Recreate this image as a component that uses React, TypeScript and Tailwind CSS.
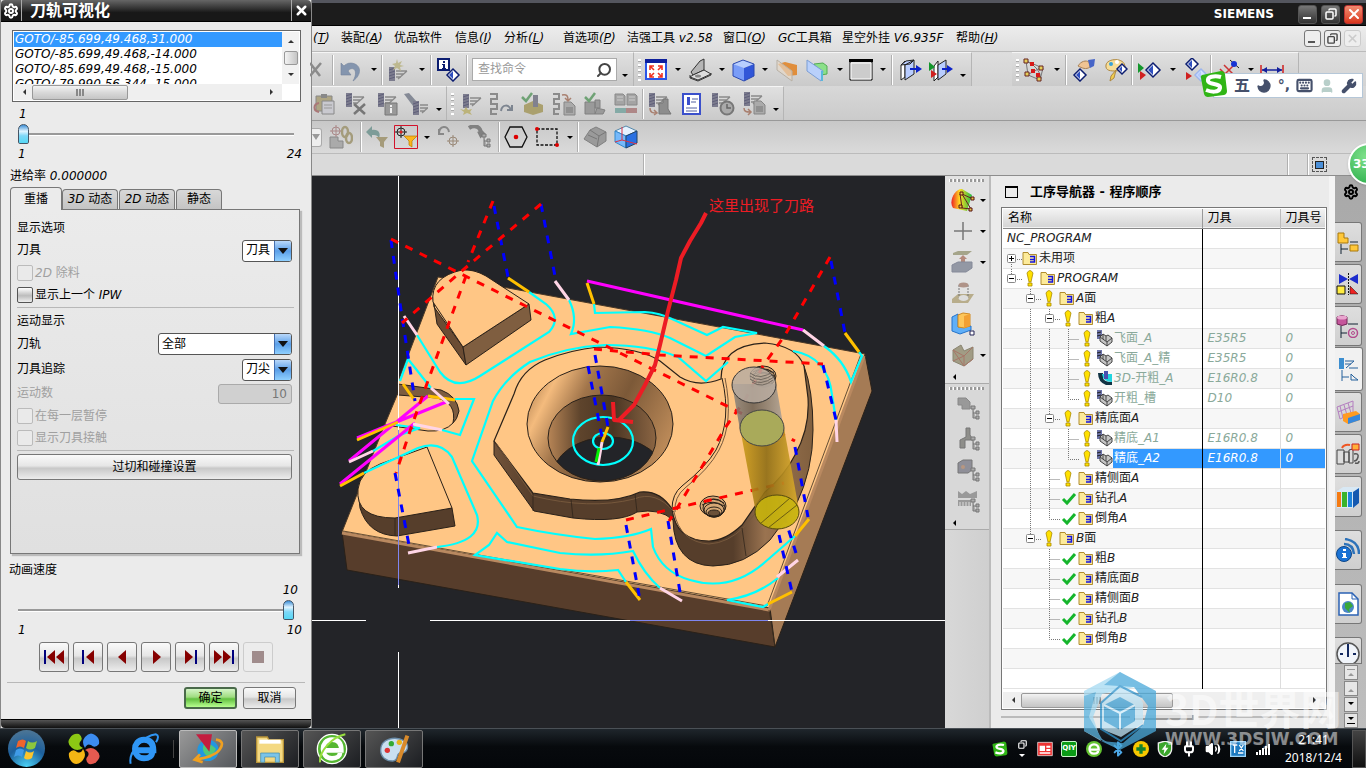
import type { ReactNode } from "react";
import { Settings, X, Search, Wrench, Keyboard, Moon, User, Copy, Volume2, Bluetooth, Plug } from "lucide-react";

// Latin runs are italic, Chinese stays upright
const Mixed = ({ text }: { text: string }) => (
    <span className="whitespace-pre">
        {text.split(/([\x20-\x7e]+)/).map((part, i) => (i % 2 ? <i key={i}>{part}</i> : part))}
    </span>
);

const Svg = ({ children, className = "h-6 w-6" }: { children: ReactNode; className?: string }) => (
    <svg viewBox="0 0 24 24" className={`shrink-0 ${className}`} fill="none" aria-hidden="true">{children}</svg>
);

/* ---------- small drawing parts ---------- */

const Drill = ({ x = 3, y = 1, c = "#7c7c8e" }: { x?: number; y?: number; c?: string }) => (
    <g transform={`translate(${x} ${y})`}>
        <path d="M0 0h6v14H0z" fill={c} />
        <path d="M0 3l6-2M0 6l6-2M0 9l6-2M0 12l6-2" stroke="#60607a" />
        <path d="M7 4h11M7 7h8M7 10h5M18 4l-9 8" stroke="#8a8a8a" strokeWidth="1.3" />
    </g>
);
const Diamond = ({ x = 12, y = 12, s = 7, soft = false }: { x?: number; y?: number; s?: number; soft?: boolean }) => (
    <g transform={`translate(${x} ${y})`}>
        <path d={`M0 ${-s}L${s} 0L0 ${s}L${-s} 0z`} fill={soft ? "#d5e2ff" : "#fff"} stroke={soft ? "#9db6ee" : "#0c1d70"} strokeWidth="1.5" />
        <path d={`M0 ${-s + 2}V${s - 2}L${-s + 2} 0z`} fill={soft ? "#b3c9fb" : "#2f4fc0"} />
    </g>
);
const Doc = ({ x, y }: { x: number; y: number }) => (
    <g transform={`translate(${x} ${y})`}>
        <path d="M0 0h7l4 4v9H0z" fill="#aaa" stroke="#858585" />
        <path d="M2 6h7M2 8h7M2 10h7" stroke="#777" />
    </g>
);
const Nodes = ({ x, y }: { x: number; y: number }) => (
    <path transform={`translate(${x} ${y})`} d="M0 0h4v3H0zM2 3v9h3M2 7h3M5 5h3v3H5zM5 10h3v3H5z" stroke="#777" fill="#aaa" />
);
const Cross = ({ x, y, c = "#a55" }: { x: number; y: number; c?: string }) => (
    <g transform={`translate(${x} ${y})`} stroke={c}>
        <circle r="4" /><path d="M-6 0H6M0-6V6" />
    </g>
);

const icons: Record<string, ReactNode> = {
    cut: <path d="M0 5l10 13M11 5L0 18" stroke="#8b8b8b" strokeWidth="2.5" />,
    undo: <path d="M3 5v12h10l-3-4c5-6 11 0 5 10 9-6 9-17-2-18-4 0-6 2-7 3z" fill="#8495ae" stroke="#76859c" strokeWidth=".6" />,
    create: <><Drill x={3} y={9} /><path d="M11 1l1 4 4-2-2 4 4 1-4 1 1 4-4-3-4 2 2-4-3-2 4-1z" fill="#bdb88f" /></>,
    info: <><path d="M1 1h11v11H1z" fill="#fff" stroke="#0c1d70" strokeWidth="2" /><path d="M6 3h2v2H6zM5 6h3v4h1v1H5v-1h1V7H5z" fill="#0c1d70" /><Diamond x={16} y={17} s={6} /></>,
    fit: <><path d="M2 2h20v19H2z" fill="#fff" stroke="#2a55e8" strokeWidth="2" /><path d="M1 1h22v4H1z" fill="#0d1f9c" /><path d="M6 12V8h4M6 8l4 4M18 12V8h-4M18 8l-4 4M6 15v4h4M6 19l4-4M18 15v4h-4M18 19l-4-4" stroke="#f03020" strokeWidth="1.6" /></>,
    view: <><path d="M3 14L12 3l4-2v11l-11 5z" fill="#b5b5b5" stroke="#333" /><path d="M16 12L5 17l-3 2 8 3 13-6z" fill="#ddd" stroke="#333" /><path d="M2 17v3l8 3 13-6v-2" stroke="#333" /><ellipse cx="10" cy="18" rx="3" ry="1.500" fill="#888" /></>,
    cube: <><path d="M1 6l10-4 11 4-11 4z" fill="#b8ceff" /><path d="M1 6l11 4v13L1 18z" fill="#7a9df8" /><path d="M22 6l-10 4v13l10-5z" fill="#3156d8" /><path d="M1 6l10-4 11 4v12l-10 5L1 18z" stroke="#2b49b0" /></>,
    planeA: <><path d="M3 6l7-2 12 3v10l-9 1z" fill="#e08e3c" /><path d="M2 2l15 11v10L2 12z" fill="#e6d9c8" fillOpacity=".65" stroke="#b8b0a4" /></>,
    planeB: <><path d="M9 6l9-1 4 3v8l-6 1z" fill="#8be089" stroke="#55ab55" /><path d="M2 2l16 11-2 10L2 13z" fill="#b9d0fb" stroke="#7b9dd4" /><path d="M17 13v10" stroke="#5bb8dc" strokeWidth="2" /></>,
    rect: <><path d="M1 2h22v20H1z" fill="#ccc" stroke="#000" /><path d="M0 1h24v3H0z" fill="#000" /><path d="M2 5h20v16H2z" stroke="#fff" /></>,
    section: <><path d="M2 7l4-4v16l-4 3z" fill="#fff" stroke="#222" /><path d="M2 7l5-4 8-1-4 4zM6 7l9-5v14l-9 6z" fill="#b9cdff" stroke="#222" /><path d="M11 11h8" stroke="#0b21c8" strokeWidth="2" /><path d="M17 7l6 4-6 4z" fill="#0b21c8" /></>,
    section2: <><path d="M5 8l4-5v16l-4 4z" fill="#fff" stroke="#222" /><path d="M9 7l8-5v14l-8 6z" fill="#b9cdff" stroke="#222" /><path d="M13 11h7" stroke="#0b21c8" strokeWidth="2" /><path d="M18 7l6 4-6 4z" fill="#0b21c8" /><path d="M0 4l6 5-6 4z" fill="#14962c" /><path d="M2 12l6 4-6 4z" fill="#d02020" /></>,
    sketch: <><path d="M4 3l2 14 12 5 3-12z M6 4q12 6 13 17M5 17L20 9" stroke="#777" /><path d="M2 1h4v4H2zM3 14h4v4H3zM17 8h4v4h-4zM15 19h4v4h-4z" fill="#e5cf59" stroke="#622" /><path d="M8 4h4v4H8zM9 11h4v4H9zM14 15h4v4h-4z" fill="#d71919" /></>,
    hand: <><Diamond x={8} y={17} s={6} /><path d="M6 8c3-5 8-6 11-4l1 5c-4 3-8 1-12-1z" fill="#f0c493" stroke="#a98258" /><path d="M16 2l7-1-1 7-4 2z" fill="#4665c8" /></>,
    palette: <><path d="M2 7C3 0 21-1 21 9c0 5-6 3-9 4-5 0-11 0-10-6z" fill="#f7dd98" stroke="#ad8843" /><path d="M12 12l-2 8-4 3 1-5z" fill="#f2cf4e" stroke="#ad8843" /><circle cx="7" cy="6" r="2" fill="#37a2d8" /><circle cx="13" cy="4" r="2" fill="#fff" /><Diamond x={18} y={11} s={5} /></>,
    play: <><path d="M0 5l6 5-6 5z" fill="#14962c" /><path d="M2 13l6 4-6 5z" fill="#d02020" /><Diamond x={15} y={12} s={7} /></>,
    play2: <><Diamond x={9} y={6} s={6} /><Diamond x={18} y={17} s={6} soft /><path d="M3 14l6 4-6 4z" fill="#d02020" /></>,
    axis: <><path d="M2 22L18 6M3 11l9 9M7 7l9 9M1 16l6 6" stroke="#c33" strokeWidth="1.5" /><path d="M13 2l9 8" stroke="#222" /><circle cx="17" cy="6" r="3" fill="#1733d4" /></>,
    dim: <><path d="M1 7v10M23 7v10" stroke="#d02020" strokeWidth="1.5" /><path d="M2 12h20" stroke="#14209c" strokeWidth="1.5" /><path d="M2 12l5-3v6zM22 12l-5-3v6z" fill="#14209c" /></>,
    paste: <><path d="M4 4h16v15H4z" fill="#aea583" stroke="#888" /><path d="M9 2h6v4H9z" fill="#888" /><path d="M10 9h12v13H10z" fill="#c9c9cf" stroke="#888" /><path d="M12 13h8M12 16h8" stroke="#999" /><path d="M7 20c-6-1-6-8 0-9" stroke="#a77" strokeWidth="2" /></>,
    del: <><Drill /><path d="M11 12l11 10M22 12L11 22" stroke="#777" strokeWidth="2.5" /></>,
    opinfo: <><Drill /><path d="M10 11h12v12H10z" fill="#999" stroke="#777" /><path d="M15 13h2v2h-2zM15 16h2v5h-2z" fill="#eee" /></>,
    tilt: <><path d="M0 2l5-1 8 9-4 4z" fill="#858a96" /><Drill x={9} y={9} /></>,
    drill2: <><Drill x={5} y={2} /><path d="M2 17l4 1 2-3 2 3 4-1-2 3 2 3-5-2-4 2 1-3z" fill="#bcb37a" /></>,
    path: <><path d="M1 2h7v5H2v5h6v5H2v5h6" stroke="#8b8b8b" strokeWidth="2" /><path d="M12 19c1-7 8-7 10-1M23 13v5h-5" stroke="#7d8590" strokeWidth="2" /></>,
    verify: <><path d="M3 13l9-4 10 4v7l-10 3-9-3z" fill="#aaa06e" /><path d="M12 3h5v12h-5z" fill="#81818f" /><path d="M1 5l4 4 6-8" stroke="#6fa275" strokeWidth="2.5" /></>,
    post: <><path d="M1 2h6v5H2v5h5v5H2v5h5" stroke="#8b8b8b" strokeWidth="2" /><Doc x={12} y={10} /><path d="M10 3c5-1 6 1 6 5M13 6l3 3 3-3" stroke="#a98070" strokeWidth="1.5" /></>,
    machine: <><path d="M2 10h10v12H2zM12 8h5v8h-5zM14 16l8 2-2 4h-8z" fill="#9a9a9a" stroke="#808080" /><path d="M2 5l4 4 6-8" stroke="#6fa275" strokeWidth="2.5" /></>,
    compare: <><path d="M1 2h8l2 2v9H1zM13 2h8l2 2v9H13z" fill="#a4a4a4" stroke="#888" /><path d="M3 5h6M3 8h6M15 5h6M15 8h6" stroke="#ccc" /><path d="M1 16h11v5H1z" fill="#84aaa6" /><path d="M12 16h11v5H12z" fill="#ae8787" /></>,
    simulate: <><Drill x={1} y={1} /><path d="M11 11h4V7h5v10l3 5H11z" fill="#8d8d8d" stroke="#777" /><path d="M2 16c0 5 3 5 7 5M6 18l3 3-3 2" stroke="#a98070" strokeWidth="1.5" /></>,
    docblue: <><path d="M3 2h17v20H3z" fill="#fff" stroke="#3b50cb" strokeWidth="2" /><path d="M7 5h3v8H7z" fill="#3b50cb" /><path d="M12 7h6M11 10h5M6 16h11M6 19h11" stroke="#5261a0" /></>,
    clock: <><Drill x={1} /><circle cx="16" cy="16" r="6.500" fill="#aaa" stroke="#777" strokeWidth="2" /><path d="M16 12v4h4" stroke="#666" strokeWidth="1.500" /></>,
    shopdoc: <><Drill x={2} y={0} /><Doc x={12} y={9} /><path d="M2 16c0 4 3 4 6 4M6 17l3 3-3 3" stroke="#a98070" strokeWidth="1.5" /></>,
    link: <><path d="M1 12h8v4h5v7H1z" fill="#aaa" stroke="#888" /><Cross x={7} y={6} c="#a88" /><ellipse cx="16" cy="7" rx="3" ry="5" stroke="#a49c7c" strokeWidth="2.5" /><ellipse cx="20" cy="13" rx="3" ry="5" stroke="#a49c7c" strokeWidth="2.5" /></>,
    filter0: <><path d="M1 7l6-6v4c7-1 9 4 7 8-2-3-3-3-7-3v3z" fill="#7d9c98" /><path d="M11 12h12l-4 5v6l-4-2v-4z" fill="#a59b7a" /></>,
    filter: <><path d="M.5.500h23v23H.5z" stroke="#d3122a" /><Cross x={7} y={7} c="#222" /><circle cx="7" cy="7" r="1.500" fill="#d22" /><path d="M10 11h13l-5 5v6l-3-2v-4z" fill="#fbb51b" stroke="#b87a00" strokeWidth=".7" /></>,
    rot: <><path d="M2 9c0-9 9-9 10-2M2 4v5h5" stroke="#888" strokeWidth="2" /><Cross x={16} y={16} c="#987" /></>,
    flow: <><path d="M1 3c6-4 12-1 12 6M11 6l2 4 3-3" stroke="#808080" strokeWidth="4" /><Nodes x={14} y={9} /></>,
    hex: <><path d="M6 2h12l5 10-5 10H6L1 12z" stroke="#111" strokeWidth="1.300" /><circle cx="12" cy="12" r="2.300" fill="#d00" /></>,
    dashrect: <><path d="M2 4h20v16H2z" stroke="#111" strokeWidth="1.300" strokeDasharray="3 1.500" /><circle cx="2" cy="4" r="2" fill="#d00" /><circle cx="22" cy="20" r="2" fill="#d00" /></>,
    shadebox: <><path d="M1 14l6-9 6-3 10 5v9l-9 6z" fill="#9a9a9a" stroke="#808080" /><path d="M7 5l9 6-2 11M16 11l7-4M5 10l9 4" stroke="#777" /></>,
    bluebox: <><path d="M1 6l11-5 11 5-11 5z" fill="#e5f2ff" stroke="#58a" /><path d="M1 6l11 5v12L1 17z" fill="#75b9fb" stroke="#38c" /><path d="M23 6l-11 5v12l11-5z" fill="#2870e2" stroke="#246" /><path d="M8 2v13l15 4M8 15l-7 2" stroke="#d34" /></>,
    rainbow: <><path d="M2 20C-3 12 5 0 11 1l10 6-5 16z" fill="url(#rainbow)" /><path d="M9 6l2 14 9 1-9-15 11 5" stroke="#622" /><path d="M9 4h3v3H9zM8 17h3v3H8zM20 9h3v3h-3zM18 20h3v3h-3z" fill="#eac54b" stroke="#511" /></>,
    plus: <path d="M12 3v18M3 12h18" stroke="#777" strokeWidth="1.500" />,
    extrude: <><path d="M2 3l5-2h14l-5 4H2z" fill="#a5a58a" /><path d="M10 14V9H8l4-4 4 4h-2v5z" fill="#b48a7c" /><path d="M1 15l6-3h14v6l-6 4H1z" fill="#9398a4" stroke="#858a99" /></>,
    boss: <><path d="M1 18l6-5h16l-6 9H1z" fill="#b8ad8b" /><path d="M8 4v13M17 4v13" stroke="#777" strokeDasharray="2 1" /><ellipse cx="12.500" cy="4" rx="5" ry="2.500" fill="#af9388" /><ellipse cx="12.500" cy="17" rx="5" ry="3" fill="#ddd" /></>,
    patch: <><path d="M1 5l6-3v13l13-1v4l-11 4-8-3z" fill="#5faff8" stroke="#2473ca" /><path d="M7 3l5-2 7 1v12l-6 2-6-1z" fill="#fdc65a" stroke="#d08a22" /><path d="M13 4l6-2v12l-6 2z" fill="#f2a033" /><path d="M19 19h4v4h-4z" fill="#fff" stroke="#225" /></>,
    mesh: <><path d="M2 7l8-5 3 6 9-4v12l-9 7-11-5z" fill="#a19c85" stroke="#8a8570" /><path d="M2 7l11 6 9-9M13 13v10M2 7l11 16 9-7M2 18l11-5" stroke="#a77668" /></>,
    nodeA: <><path d="M1 2h8l4 4v7H5V9H1z" fill="#999" stroke="#888" /><Nodes x={14} y={10} /></>,
    nodeB: <><path d="M9 1h4v7l3 5H8v8H3v-8l6-3z" fill="#8e8e8a" stroke="#777" /><Nodes x={14} y={10} /></>,
    nodeC: <><path d="M1 5l5-3h9v10l-4 3H1z" fill="#8f8f98" stroke="#777" /><circle cx="6" cy="9" r="2" fill="#b79781" /><Nodes x={14} y={10} /></>,
    nodeD: <><path d="M1 2l4 3 4-3 4 3 7-3v7H1zM1 11h13v6H1z" fill="#999" /><path d="M3 13v4M6 13v4M9 13v4M12 13v4" stroke="#ddd" /><Nodes x={14} y={10} /></>,
};

const Icon = ({ name, className }: { name: string; className?: string }) => <Svg className={className}>{icons[name]}</Svg>;

/* ---------- toolbar pieces ---------- */

const Tool = ({ name, w }: { name: string; w: string }) => (
    <button type="button" aria-label={name} className={`flex h-full shrink-0 items-center justify-center ${w}`}>
        <Icon name={name} />
    </button>
);
const Caret = ({ w, low = false }: { w: string; low?: boolean }) => (
    <button type="button" aria-label="more" className={`flex h-full shrink-0 items-center justify-center ${low ? "pt-3" : ""} ${w}`}>
        <span className="border-x-[3px] border-t-[3px] border-x-transparent border-t-black" />
    </button>
);
const Sep = () => <span className="h-[30px] w-[2px] shrink-0 border-l border-[#b0b0b0] bg-white" />;
const Grip = () => <span className="ml-1 mr-px h-[22px] w-[3px] shrink-0 bg-[repeating-linear-gradient(#fff_0_2px,#aaa_2px_3px,transparent_3px_5px)]" />;

const Group = ({ children }: { children: ReactNode }) => (
    <div className="flex h-full shrink-0 items-center border-r border-t border-r-[#b5b5b5] border-t-[#f5f5f5] bg-gradient-to-b from-[#e0e0e0] to-[#cacaca]">{children}</div>
);

const menus: [string, string, string][] = [
    ["", "T", "w-[28px]"],
    ["装配", "A", "w-[53px]"],
    ["优品软件", "", "w-[61px]"],
    ["信息", "I", "w-[49px]"],
    ["分析", "L", "w-[59px]"],
    ["首选项", "P", "w-[64px]"],
    ["洁强工具 v2.58", "", "w-[96px]"],
    ["窗口", "O", "w-[55px]"],
    ["GC工具箱", "", "w-[64px]"],
    ["星空外挂 V6.935F", "", "w-[114px]"],
    ["帮助", "H", "w-[48px]"],
];

const TitleBar = () => (
    <div className="flex h-[26px] items-center justify-end gap-[4px] border-b border-t-[3px] border-b-black border-t-[#54565e] bg-[#1c1c1c] pr-[3px]">
        <span className="mr-[20px] text-[12px] font-bold text-white">SIEMENS</span>
        <button type="button" aria-label="Minimize" className="flex h-[19px] w-[19px] items-end rounded-[3px] border border-[#555] bg-gradient-to-b from-[#777] to-[#333] p-1"><span className="h-[2px] w-[8px] bg-white" /></button>
        <button type="button" aria-label="Restore" className="flex h-[19px] w-[19px] items-center justify-center rounded-[3px] border border-[#555] bg-gradient-to-b from-[#777] to-[#333] text-white"><Copy className="h-3 w-3 -scale-x-100" strokeWidth={3} /></button>
        <button type="button" aria-label="Close" className="flex h-[19px] w-[19px] items-center justify-center rounded-[3px] border border-[#b33] bg-gradient-to-b from-[#f08a70] to-[#d9341a] text-white"><X className="h-4 w-4" strokeWidth={3} /></button>
    </div>
);

const MenuBar = () => (
    <div className="flex h-[26px] items-center border-b border-[#bbb] bg-gradient-to-b from-[#ececec] to-[#dedede] pb-px pl-px">
        {menus.map(([label, key, w]) => (
            <button type="button" key={label + key} className={`shrink-0 text-left ${w}`}>
                <Mixed text={label} />
                {key && <i>(<u>{key}</u>)</i>}
            </button>
        ))}
        <div className="ml-auto flex gap-[3px] pr-[5px]">
            <button type="button" aria-label="Minimize document" className="flex h-[17px] w-[17px] items-end rounded-[3px] border border-[#777] bg-[#eee] p-[3px]"><span className="h-[2px] w-[7px] bg-[#555]" /></button>
            <button type="button" aria-label="Restore document" className="flex h-[17px] w-[17px] items-center justify-center rounded-[3px] border border-[#777] bg-[#eee] text-[#444]"><Copy className="h-[11px] w-[11px] -scale-x-100" strokeWidth={3} /></button>
            <button type="button" disabled aria-label="Close document" className="flex h-[17px] w-[17px] items-center justify-center rounded-[3px] border border-[#ccc] bg-[#eee] text-[#ccc]"><X className="h-[13px] w-[13px]" strokeWidth={3} /></button>
        </div>
    </div>
);

const Toolbars = () => (
    <>
        <div className="flex h-[34px] bg-gradient-to-b from-[#dedede] to-[#d3d3d3]">
            <Group>
                <Tool name="cut" w="w-[20px]" /><Sep />
                <Tool name="undo" w="w-[32px]" /><Caret w="w-[15px]" /><Sep />
                <Tool name="create" w="w-[30px]" /><Caret w="w-[17px]" /><Sep />
                <Tool name="info" w="w-[34px]" /><Sep />
                <label className="ml-1 flex h-[23px] w-[145px] items-center border border-[#aaa] bg-white px-1">
                    <input aria-label="查找命令" placeholder="查找命令" className="w-0 flex-1 pl-px outline-none placeholder:text-[#999]" />
                    <Search className="h-4 w-4 -scale-x-100 text-[#444]" strokeWidth={3} />
                </label>
                <Caret w="w-[16px]" low />
            </Group>
            <Group>
                <Grip /><Tool name="fit" w="w-[28px]" /><Caret w="w-[16px]" />
                <Tool name="view" w="w-[27px]" /><Caret w="w-[17px]" />
                <Tool name="cube" w="w-[27px]" /><Caret w="w-[16px]" />
                <Tool name="planeA" w="w-[28px]" /><Tool name="planeB" w="w-[31px]" /><Caret w="w-[15px]" />
                <Tool name="rect" w="w-[28px]" /><Caret w="w-[16px]" /><Sep />
                <Tool name="section" w="w-[35px]" /><Tool name="section2" w="w-[26px]" /><Caret w="w-[17px]" low />
            </Group>
            <span className="w-[40px] shrink-0" />
            <Group>
                <Grip /><Tool name="sketch" w="w-[28px]" /><Caret w="w-[17px]" /><Sep />
                <Tool name="hand" w="w-[33px]" /><Tool name="palette" w="w-[31px]" /><Sep />
                <Tool name="play" w="w-[33px]" /><Caret w="w-[13px]" /><Tool name="play2" w="w-[31px]" /><Sep />
                <Tool name="axis" w="w-[34px]" /><Caret w="w-[10px]" /><Tool name="dim" w="w-[32px]" /><span className="w-[10px]" />
            </Group>
        </div>
        <div className="flex h-[35px] border-b border-[#999] bg-gradient-to-b from-[#d8d8d8] to-[#cbcbcb]">
            <Group>
                <Tool name="paste" w="w-[24px]" /><Tool name="del" w="w-[37px]" /><Tool name="opinfo" w="w-[27px]" /><Tool name="tilt" w="w-[32px]" /><Caret w="w-[14px]" low />
            </Group>
            <Group>
                <Grip /><Tool name="drill2" w="w-[30px]" /><Tool name="path" w="w-[32px]" /><Tool name="verify" w="w-[31px]" />
                <Tool name="post" w="w-[31px]" /><Tool name="machine" w="w-[31px]" /><Tool name="compare" w="w-[32px]" /><Sep />
                <Tool name="simulate" w="w-[32px]" /><Tool name="docblue" w="w-[31px]" /><Tool name="clock" w="w-[31px]" /><Tool name="shopdoc" w="w-[31px]" /><Caret w="w-[14px]" low />
            </Group>
        </div>
        <div className="flex h-[33px] items-center border-b border-[#bbb] bg-gradient-to-b from-[#c8c8c8] to-[#dadada]">
            <span className="flex h-[19px] w-[10px] shrink-0 items-center rounded-r-[3px] border border-l-0 border-[#aaa] bg-[#eee]"><span className="border-x-[4px] border-t-[6px] border-x-transparent border-t-[#999]" /></span>
            <Tool name="link" w="w-[38px]" /><Sep />
            <Tool name="filter0" w="w-[29px]" /><Tool name="filter" w="w-[30px]" /><Caret w="w-[12px]" />
            <Tool name="rot" w="w-[31px]" /><Tool name="flow" w="w-[32px]" /><span className="w-[2px]" /><Sep />
            <Tool name="hex" w="w-[32px]" /><Tool name="dashrect" w="w-[30px]" /><Caret w="w-[15px]" /><Sep />
            <Tool name="shadebox" w="w-[32px]" /><Tool name="bluebox" w="w-[30px]" />
        </div>
        <div className="flex h-[22px] items-center border-b border-[#8d8d8d] bg-[#dadada]">
            <span className="ml-[331px] h-full w-[2px] border-l border-[#b0b0b0] bg-white" />
            <span className="ml-auto h-full w-[2px] border-l border-[#b0b0b0] bg-white" />
            <span className="ml-[18px] h-full w-[2px] border-l border-[#b0b0b0] bg-white" />
            <span className="ml-[3px] mr-[39px] flex h-[15px] w-[15px] items-center justify-center border border-dashed border-[#555]"><span className="h-[8px] w-[9px] border border-[#222] bg-[#4a8fd8]" /></span>
        </div>
    </>
);

/* ---------- tool path dialog ---------- */

const raised = "border border-[#777] bg-[linear-gradient(#fafafa,#e6e6e6_45%,#c8c8c8_55%,#ececec)]";

const Slider = ({ label, value, max }: { label: string; value: number; max: number }) => (
    <input
        type="range"
        aria-label={label}
        min={1}
        max={max}
        defaultValue={value}
        className="block h-[20px] w-full appearance-none bg-[linear-gradient(transparent_9px,#999_9px_11px,#fff_11px_12px,transparent_12px)] [&::-webkit-slider-thumb]:h-[20px] [&::-webkit-slider-thumb]:w-[11px] [&::-webkit-slider-thumb]:appearance-none [&::-webkit-slider-thumb]:rounded-b-[2px] [&::-webkit-slider-thumb]:rounded-t-[6px] [&::-webkit-slider-thumb]:border [&::-webkit-slider-thumb]:border-[#456] [&::-webkit-slider-thumb]:bg-[linear-gradient(#3b8fd8,#e0f4ff_35%,#7fd8f8_60%,#55d8f5)]"
    />
);

const Drop = ({ id, value, w }: { id: string; value: string; w: string }) => (
    <span className={`flex h-[22px] overflow-hidden rounded-[3px] border border-[#555] bg-white ${w}`}>
        <select id={id} className="w-0 flex-1 appearance-none bg-transparent pl-[3px] outline-none"><option>{value}</option></select>
        <span className="flex w-[17px] items-center justify-center border-l border-[#456fb0] bg-[linear-gradient(#b9d8fa,#5b9fe8_50%,#8fd0ff)]">
            <span className="border-x-[5px] border-t-[6px] border-x-transparent border-t-[#111]" />
        </span>
    </span>
);

const Check = ({ text, disabled = false }: { text: string; disabled?: boolean }) => (
    <label className={`flex h-[22px] items-center gap-[2px] ${disabled ? "text-[#a0a0a0]" : ""}`}>
        <input type="checkbox" disabled={disabled} className="h-4 w-4 appearance-none rounded-[2px] border border-[#555] bg-[linear-gradient(#fff,#bcbcbc_55%,#eee)] disabled:border-[#bbb] disabled:bg-none disabled:bg-[#eaeaea]" />
        <Mixed text={text} />
    </label>
);

const Arrow = ({ dir }: { dir: string }) => <span className={`shrink-0 border-[3px] border-transparent ${dir}`} />;

const HScroll = ({ thumb }: { thumb: string }) => (
    <div className="flex h-[16px] items-center bg-[#efefef]">
        <span className="flex w-[18px] justify-center"><Arrow dir="border-r-[#333]" /></span>
        <span className={`flex h-[15px] items-center justify-center gap-px rounded-[2px] border border-[#999] bg-[linear-gradient(#f3f3f3,#d9d9d9_50%,#c5c5c5)] ${thumb}`}>
            <span className="h-[7px] w-[2px] bg-[#888]" /><span className="h-[7px] w-[2px] bg-[#888]" /><span className="h-[7px] w-[2px] bg-[#888]" />
        </span>
        <span className="ml-auto flex w-[18px] justify-center"><Arrow dir="border-l-[#333]" /></span>
    </div>
);

const gotoLines = ["GOTO/-85.699,49.468,31.000", "GOTO/-85.699,49.468,-14.000", "GOTO/-85.699,49.468,-15.000", "GOTO/-79.990,56.344,-15.000"];

const playback: [string, ReactNode][] = [
    ["First", <><path d="M3 5v14" stroke="#00007c" strokeWidth="2" /><path d="M13 5v14L5 12zM22 5v14l-8-7z" fill="#860000" /></>],
    ["Previous", <><path d="M7 5v14" stroke="#00007c" strokeWidth="2" /><path d="M18 5v14l-8-7z" fill="#860000" /></>],
    ["Reverse", <path d="M16 5v14l-8-7z" fill="#860000" />],
    ["Play", <path d="M9 5v14l8-7z" fill="#860000" />],
    ["Next", <><path d="M7 5v14l8-7z" fill="#860000" /><path d="M18 5v14" stroke="#00007c" strokeWidth="2" /></>],
    ["Last", <><path d="M2 5v14l8-7zM11 5v14l8-7z" fill="#860000" /><path d="M21 5v14" stroke="#00007c" strokeWidth="2" /></>],
];

const Dialog = () => (
    <aside className="flex w-[312px] shrink-0 flex-col border-x border-[#888] bg-[#ebebeb]">
        <header className="flex h-[22px] items-center rounded-t-[4px] border-b border-black bg-[linear-gradient(#666,#333_40%,#181818_60%)] text-white">
            <span className="flex h-full w-[21px] items-center justify-center border-r border-[#aaa]"><Settings className="h-4 w-4" strokeWidth={3} /></span>
            <h1 className="pl-2 text-[16px] font-bold leading-[20px]">刀轨可视化</h1>
            <button type="button" aria-label="Close dialog" className="ml-auto flex h-full w-[20px] items-center justify-center border-l border-[#aaa]"><X className="h-[15px] w-[15px]" strokeWidth={4} /></button>
        </header>

        <div className="ml-[11px] mr-[10px] mt-[8px] h-[72px] border border-[#666] bg-white p-px">
            <div className="flex h-[52px]">
                <ul className="h-full flex-1 overflow-hidden">
                    {gotoLines.map((line, i) => (
                        <li key={i} className={`h-[15px] pl-px italic leading-[15px] ${i === 0 ? "bg-[#3399ff] text-white" : ""}`}>{line}</li>
                    ))}
                </ul>
                <div className="flex w-[17px] flex-col items-center justify-between bg-[#f2f2f2] py-[5px]">
                    <Arrow dir="border-b-[#333]" />
                    <span className="h-[14px] w-[14px] rounded-[2px] border border-[#999] bg-gradient-to-r from-[#f3f3f3] to-[#c5c5c5]" />
                    <Arrow dir="border-t-[#333]" />
                </div>
            </div>
            <div className="mr-[17px]"><HScroll thumb="w-[96px]" /></div>
        </div>

        <div className="px-[17px] pt-[2px] italic">
            <div className="h-[20px] pl-px leading-[20px]">1</div>
            <Slider label="刀轨位置" value={1} max={24} />
            <div className="-mr-2 flex h-[20px] justify-between leading-[20px]"><span>1</span><span>24</span></div>
        </div>
        <p className="h-[23px] px-[9px] leading-[24px]"><Mixed text="进给率 0.000000" /></p>

        <div role="tablist" className="ml-[9px] flex h-[22px] items-end">
            {["重播", "3D 动态", "2D 动态", "静态"].map((tab, i) => (
                <button
                    type="button"
                    role="tab"
                    key={tab}
                    className={`rounded-t-[4px] border border-b-0 border-[#777] ${i === 0 ? "z-10 -mb-px h-[23px] w-[52px] bg-[#ebebeb]" : `mr-px h-[20px] bg-gradient-to-b from-[#d8d8d8] to-[#c4c4c4] ${i === 3 ? "w-[46px]" : "w-[56px]"}`}`}
                >
                    <Mixed text={tab} />
                </button>
            ))}
        </div>
        <div className="ml-[9px] mr-[11px] flex h-[345px] flex-col border border-[#777] bg-gradient-to-b from-[#ebebeb] to-[#e0e0e0] pl-[6px] pr-[5px] pt-[7px] shadow-[2px_2px_1px_#bbb]">
            <h2 className="h-[22px] leading-[22px]">显示选项</h2>
            <div className="flex h-[23px] items-center justify-between pr-[2px]"><label htmlFor="tool">刀具</label><Drop id="tool" value="刀具" w="w-[50px]" /></div>
            <Check text="2D 除料" disabled />
            <Check text="显示上一个 IPW" />
            <hr className="my-px border-[#b8b8b8]" />
            <h2 className="h-[24px] leading-[24px]">运动显示</h2>
            <div className="flex h-[22px] items-center justify-between pr-[2px]"><label htmlFor="path">刀轨</label><Drop id="path" value="全部" w="w-[134px]" /></div>
            <div className="mt-[3px] flex h-[23px] items-center justify-between pr-[2px]"><label htmlFor="trace">刀具追踪</label><Drop id="trace" value="刀尖" w="w-[50px]" /></div>
            <div className="mt-px flex h-[23px] items-center justify-between pr-[2px] text-[#a0a0a0]">
                <label htmlFor="count">运动数</label>
                <input id="count" disabled defaultValue="10" className="h-[20px] w-[74px] rounded-[3px] border border-[#aaa] bg-[#d0d0d0] pr-1 text-right text-[#777]" />
            </div>
            <Check text="在每一层暂停" disabled />
            <Check text="显示刀具接触" disabled />
            <hr className="mb-[3px] mt-px border-[#b8b8b8]" />
            <button type="button" className={`mr-[2px] h-[26px] rounded-[3px] ${raised}`}>过切和碰撞设置</button>
        </div>

        <h2 className="mt-[6px] h-[20px] px-[8px] leading-[20px]">动画速度</h2>
        <div className="px-[17px] italic">
            <div className="-mr-1 h-[20px] text-right leading-[20px]">10</div>
            <Slider label="动画速度" value={10} max={10} />
            <div className="-mr-2 flex h-[22px] justify-between leading-[20px]"><span>1</span><span>10</span></div>
        </div>
        <div className="flex gap-[4px] pl-[38px]">
            {playback.map(([name, shape]) => (
                <button type="button" key={name} aria-label={name} className={`flex h-[30px] w-[30px] items-center justify-center rounded-[3px] ${raised}`}><Svg>{shape}</Svg></button>
            ))}
            <button type="button" disabled aria-label="Stop" className="flex h-[30px] w-[30px] items-center justify-center rounded-[3px] border border-[#ccc] bg-[#ececec]"><span className="h-3 w-3 bg-[#a08c8c]" /></button>
        </div>
        <hr className="mx-[6px] mt-[10px] border-[#b8b8b8]" />
        <div className="mt-[4px] flex justify-end gap-[6px] pr-[15px]">
            <button type="button" className="h-[22px] w-[53px] rounded-[3px] border-2 border-[#4a6a4a] bg-[linear-gradient(#d5f5c8,#9fdc80_45%,#62c040_55%,#b8ff90)]">确定</button>
            <button type="button" className={`h-[22px] w-[53px] rounded-[3px] ${raised}`}>取消</button>
        </div>
        <footer className="mt-auto h-[9px] rounded-b-[4px] border-t border-black bg-gradient-to-b from-[#555] to-[#111]" />
    </aside>
);

/* ---------- 3D view ---------- */

const cyanPaths = [
    "M594 304L595 313L645 312Q660 313 672 319L707 335L723 327L757 333L735 337L706 356L670 338Q650 329 610 327L571 334Q578 318 569 300",
    "M529 292L546 304Q562 318 549 332L480 376Q455 392 440 372L417 335",
    "M431 388L408 359L400 381",
    "M455 399H474L460 435L442 430",
    "M728 362L706 381L678 357Q650 345 605 345Q565 347 530 362Q505 378 493 401L472 461L517 527Q555 535 595 539Q630 538 651 529L653 547Q662 572 690 580Q730 592 764 563L795 536",
    "M364 473L418 448Q440 440 452 457L477 515Q484 542 437 547",
    "M373 451L400 435L420 428L396 425",
    "M660 588Q644 574 633 551Q600 557 560 553L507 542L497 533L489 545L475 555L560 569Q590 573 618 570L626 582",
    "M768 604L763 607L727 600Q756 596 778 578",
    "M824 346Q844 360 851 382L862 356L859 352",
    "M793 351Q828 357 832 395L836 420",
];
const redPaths = [
    "M391 239L622 354L735 410L795 441",
    "M493 201L468 262M466 276L412 425L396 473",
    "M541 204L470 264L402 323",
    "M594 349L660 355L823 364",
    "M830 257L785 335L763 366L745 400L727 425L676 510L669 521",
    "M626 520L680 507L784 483",
];
const bluePaths = [
    "M391 240L401 310L415 401", "M494 206L508 277", "M541 204L555 276", "M831 261L845 333", "M823 365L836 420",
    "M588 366L602 437", "M595 355L608 427", "M395 473L409 545", "M626 525L640 600", "M668 521L680 592",
    "M795 447L808 517", "M779 500L796 553", "M779 535L792 592",
];
const goldPath = "M587 283L594 304M508 278L529 292M845 333L859 352M357 440L398 422M340 486L364 473M403 384L415 401M428 396L455 400M608 427L602 442M626 582L640 600M768 604L792 592M795 536L809 519";
const pinkPath = "M555 281L569 300M803 330L824 346M404 316L417 335M431 388L449 404M413 424L442 430M349 462L373 451M408 553L437 547M602 442L598 465M836 420L837 442M660 588L682 601M777 577L798 560";

const bossTop =
    "M494 441L514 394Q521 370 545 360Q570 350 598 347Q640 348 660 361L680 377Q698 388 721 379Q721 345 765 343Q797 346 804 366L808 398Q810 428 795 455Q785 475 765 492L742 525Q725 541 709 541Q676 541 672 509Q660 490 640 492Q615 504 570 499L533 493z";
const bossWall =
    "M494 441V455L534 511L573 518Q620 523 637 512Q660 508 673 520Q674 565 713 566Q745 566 770 540L796 505Q813 470 813 430Q813 390 804 366L750 420H560z";

const Thread = ({ cx, cy }: { cx: number; cy: number }) => (
    <g stroke="#2a2119" strokeWidth="1" fill="none">
        <ellipse cx={cx} cy={cy} rx="13" ry="10" fill="#d6a875" />
        <ellipse cx={cx + 1} cy={cy + 2} rx="11" ry="9" />
        <ellipse cx={cx + 1} cy={cy + 4} rx="10" ry="7" />
        <ellipse cx={cx + 1} cy={cy + 6} rx="8" ry="5" />
        <ellipse cx={cx + 1} cy={cy + 7} rx="6" ry="3" fill="#6b5139" />
        <path d={`M${cx - 10} ${cy - 4}q10-6 21 1M${cx - 11} ${cy - 1}q11-6 22 1`} />
    </g>
);

const Viewport = () => (
    <main className="min-w-0 flex-1 bg-[#232428]">
        <svg viewBox="312 176 633 552" className="block w-full" fill="none" role="img" aria-label="工件刀路">
            <defs>
                <linearGradient id="cone" x1="0" y1=".2" x2="1" y2=".6">
                    <stop offset="0" stopColor="#b58453" /><stop offset=".14" stopColor="#f4bb7d" /><stop offset=".35" stopColor="#a0744a" /><stop offset=".6" stopColor="#7c5938" /><stop offset="1" stopColor="#bd8b59" />
                </linearGradient>
                <linearGradient id="bore"><stop offset="0" stopColor="#b78556" /><stop offset=".3" stopColor="#5e442c" /><stop offset=".6" stopColor="#4a3523" /><stop offset="1" stopColor="#8b6543" /></linearGradient>
                <linearGradient id="wall"><stop offset="0" stopColor="#72533a" /><stop offset=".12" stopColor="#563e2b" /><stop offset=".75" stopColor="#563e2b" /><stop offset=".85" stopColor="#9a7350" /><stop offset="1" stopColor="#81603f" /></linearGradient>
                <linearGradient id="shank"><stop offset="0" stopColor="#8d8780" /><stop offset=".4" stopColor="#675d53" /><stop offset="1" stopColor="#aba298" /></linearGradient>
                <linearGradient id="flute"><stop offset="0" stopColor="#cf9e1c" /><stop offset=".45" stopColor="#8e6d14" /><stop offset="1" stopColor="#deae2c" /></linearGradient>
                <clipPath id="boreClip"><ellipse cx="602" cy="438" rx="54" ry="43" /></clipPath>
            </defs>

            {/* stock */}
            <path d="M342 532L770 608L775 647L347 570z" fill="#573d2b" stroke="#2a2119" />
            <path d="M770 608L865 354L872 391L775 647z" fill="#a57b55" stroke="#2a2119" />
            <path d="M342 532L385 424L398 393V382L438 277L508 288L865 354L770 608z" fill="#ffc685" stroke="#4a3826" />
            <path d="M342 533L769 610L864 356" stroke="#b98960" strokeWidth="3" />
            <path d="M343 531L767 606L861 354M769 610L775 646" stroke="#3c2e20" strokeWidth=".8" />

            {/* side slot */}
            <path d="M398 384L441 390Q457 396 459 411Q457 420 453 423Q457 403 437 398L398 395z" fill="#7d5c3f" stroke="#2a2119" />
            <path d="M453 423Q445 432 428 431L385 425" stroke="#2a2119" />

            {/* corner bosses */}
            <path d="M434 307L463 347L466 365L437 324L433 297z" fill="#6b4c33" stroke="#2a2119" />
            <path d="M463 347L529 304L531 320L466 365z" fill="#7f5e40" stroke="#2a2119" />
            <path d="M433 302Q430 277 462 270Q474 269 486 276L529 304L463 347z" fill="#ffc685" stroke="#2a2119" />
            <path d="M358 490L360 508Q368 535 397 536L455 526L452 508L395 505z" fill="#563e2b" stroke="#2a2119" />
            <path d="M427 447L452 508L395 518Q355 518 358 489Q360 472 380 464z" fill="#ffc685" stroke="#2a2119" />
            <path d="M395 518V536" stroke="#2a2119" strokeWidth=".7" />

            {/* centre boss */}
            <path d={bossWall} fill="url(#wall)" stroke="#2a2119" />
            <path d={bossTop} fill="#ffc685" stroke="#2a2119" strokeWidth="1.2" />
            <path d="M722 378Q732 420 716 450Q706 467 682 486Q672 494 672 509" stroke="#2a2119" />
            <path d="M725 378Q734 422 719 450Q709 469 685 488Q674 497 675 512M496 443L533 496Q590 510 634 499Q656 490 674 512Q680 542 709 544Q728 543 744 527L770 496" stroke="#76583c" />
            <path d="M533 493V511M571 499L573 518M635 494L637 512M742 528L746 556" stroke="#2a2119" strokeWidth=".7" />
            <ellipse cx="600" cy="424" rx="73" ry="58" fill="url(#cone)" stroke="#2a2119" />
            <g clipPath="url(#boreClip)">
                <ellipse cx="602" cy="438" rx="54" ry="43" fill="url(#bore)" />
                <ellipse cx="609" cy="478" rx="57" ry="41" fill="#232428" stroke="#2a2119" />
            </g>
            <ellipse cx="602" cy="438" rx="54" ry="43" stroke="#2a2119" />
            <Thread cx={713} cy={506} />
            <Thread cx={763} cy={376} />

            {/* coordinate axes */}
            <path d="M398.500 176V588M398.500 652V728M312 620.500H366M430 620.500H945" stroke="#fff" />
            <path d="M398.500 430V585M630 620.500H768" stroke="#7f86f0" />

            {/* moves */}
            <g strokeWidth="2.2" stroke="#00ffff">
                {cyanPaths.map((d) => <path key={d} d={d} />)}
                <ellipse cx="603" cy="441" rx="30" ry="24" /><ellipse cx="603" cy="441" rx="10" ry="8" />
            </g>
            <path d="M587 281L803 330M446 402L357 438M428 396L349 461M415 423L340 484" stroke="#ff00ff" strokeWidth="3" />
            <path d={goldPath} stroke="#ffc000" strokeWidth="3" />
            <path d={pinkPath} stroke="#ffd5e6" strokeWidth="3" />
            <path d="M596 462L599 448" stroke="#00f000" strokeWidth="3" />
            <g stroke="#0000ff" strokeWidth="3" strokeDasharray="8 8">{bluePaths.map((d) => <path key={d} d={d} />)}</g>
            <g stroke="#ff0000" strokeWidth="3" strokeDasharray="8 8">{redPaths.map((d) => <path key={d} d={d} />)}</g>

            {/* cutter */}
            <path d="M732 384L740 430H784L776 384z" fill="url(#shank)" fillOpacity=".85" />
            <ellipse cx="754" cy="385" rx="22" ry="18" fill="#b8aca0" fillOpacity=".85" stroke="#333" />
            <path d="M740 428L756 513Q760 528 777 529Q797 528 799 510L784 428z" fill="url(#flute)" fillOpacity=".9" />
            <ellipse cx="762" cy="428" rx="22" ry="18" fill="#a9aa5a" stroke="#444" />
            <ellipse cx="777" cy="512" rx="22" ry="17" fill="#c9b60f" fillOpacity=".85" stroke="#554a10" />
            <path d="M760 524L790 498M768 528L797 505" stroke="#6a5c12" />
            <path d="M750 373q10 8 24-2M750 376q10 8 24-2M750 379q10 8 24-2M752 382q10 7 21-2" stroke="#71685e" />

            {/* hand drawn note */}
            <path d="M706 213L701 223L690 241L681 258L676 280L668 311L660 345L655 365L645 385L634 405L618 421M613 402L614 420L633 422" stroke="#ed1c24" strokeWidth="4" strokeLinejoin="round" />
            <text x="709" y="211" fontSize="15" fill="#ed1c24">这里出现了刀路</text>
        </svg>
    </main>
);

/* ---------- operation navigator ---------- */

type Row = { g: string; s?: "!" | "v"; icon?: "folder" | "mill" | "cavity"; text: string; tool?: string; selected?: boolean };

// guide letters: | line, t tee, L corner, _ blank, + / - expander
const rows: Row[] = [
    { g: "", text: "NC_PROGRAM" },
    { g: "+", icon: "folder", text: "未用项" },
    { g: "-", s: "!", icon: "folder", text: "PROGRAM" },
    { g: "_-", s: "!", icon: "folder", text: "A面" },
    { g: "_|-", s: "!", icon: "folder", text: "粗A" },
    { g: "_||t", s: "!", icon: "mill", text: "飞面_A", tool: "E35R5" },
    { g: "_||t", s: "!", icon: "mill", text: "飞面_A_精", tool: "E35R5" },
    { g: "_||t", s: "!", icon: "cavity", text: "3D-开粗_A", tool: "E16R0.8" },
    { g: "_||L", s: "!", icon: "mill", text: "开粗_槽", tool: "D10" },
    { g: "_|-", s: "!", icon: "folder", text: "精底面A" },
    { g: "_||t", s: "!", icon: "mill", text: "精底_A1", tool: "E16R0.8" },
    { g: "_||L", s: "!", icon: "mill", text: "精底_A2", tool: "E16R0.8", selected: true },
    { g: "_|t", s: "!", icon: "folder", text: "精侧面A" },
    { g: "_|t", s: "v", icon: "folder", text: "钻孔A" },
    { g: "_|L", s: "v", icon: "folder", text: "倒角A" },
    { g: "_-", s: "!", icon: "folder", text: "B面" },
    { g: "__t", s: "v", icon: "folder", text: "粗B" },
    { g: "__t", s: "v", icon: "folder", text: "精底面B" },
    { g: "__t", s: "v", icon: "folder", text: "精侧面B" },
    { g: "__t", s: "v", icon: "folder", text: "钻孔B" },
    { g: "__L", s: "v", icon: "folder", text: "倒角B" },
    { g: "", text: "" },
    { g: "", text: "" },
];

const guideLines: Record<string, string> = { "|": "M8.500 0V20", t: "M8.500 0V20M8.500 10.500H19", L: "M8.500 0V10.500H19", _: "", "+": "M14 10.500H19M8.500 15V20", "-": "M14 10.500H19M8.500 0V5" };

const Guide = ({ kind }: { kind: string }) => (
    <svg viewBox="0 0 19 19" className="h-[19px] w-[19px] shrink-0" fill="none" aria-hidden="true">
        <path d={guideLines[kind]} stroke="#777" strokeDasharray="1 1" />
        {(kind === "+" || kind === "-") && (
            <>
                <rect x="4.500" y="5.500" width="8" height="8" rx="1" fill="#fff" stroke="#888" />
                <path d={kind === "+" ? "M6 9.500h5M8.500 7v5" : "M6 9.500h5"} stroke="#000" />
            </>
        )}
    </svg>
);

const Status = ({ s }: { s: "!" | "v" }) => (
    <svg viewBox="0 0 18 19" className="h-[19px] w-[18px] shrink-0" fill="none" aria-hidden="true">
        {s === "!" ? (
            <path d="M5 4q3-5 6 0L9 13H7zM6 14h4v3H6z" fill="#ffe100" stroke="#a98900" strokeWidth=".8" />
        ) : (
            <path d="M3 10l4 4 8-9" stroke="#15b52c" strokeWidth="3" />
        )}
    </svg>
);

const RowIcon = ({ icon }: { icon: "folder" | "mill" | "cavity" }) => (
    <svg viewBox="0 0 16 18" className="h-[18px] w-[16px] shrink-0" fill="none" aria-hidden="true">
        {icon === "folder" && (
            <>
                <path d="M1 3.500h5l1 2h7.500v10H1z" fill="#fdeb9a" stroke="#b08d2f" />
                <path d="M8 7.500h4.500V13H8M8 10.500h4" stroke="#1414e0" strokeWidth="1.500" />
            </>
        )}
        {icon === "mill" && (
            <>
                <path d="M0 1h5v9H0z" fill="#6b72a8" /><path d="M0 4l4-1M0 7l4-1" stroke="#222" />
                <path d="M3 8l3-3 3 2 2-1 4 3v4l-5 4-7-5z" fill="#c4c4c4" stroke="#444" /><path d="M3 8l7 5 5-4M10 13v4M6 5v5M9 7v5" stroke="#444" />
            </>
        )}
        {icon === "cavity" && (
            <>
                <path d="M1 4h5v5q1 4 9 4v3H9Q1 13 1 4z" fill="#134" /><path d="M5 5h10v8Q6 13 5 5z" fill="#21d5e0" /><path d="M7 2h4v8H7z" fill="#4950b0" />
            </>
        )}
    </svg>
);

const Navigator = () => (
    <section className="flex w-[344px] shrink-0 flex-col border-r-[6px] border-[#f4f4f4] bg-[#ebebeb] pb-[7px] pl-[10px] pr-[2px]">
        <h2 className="flex h-[31px] items-center gap-[12px] pl-1 text-[13px] font-bold"><span className="h-[12px] w-[13px] border border-t-2 border-black" />工序导航器 - 程序顺序</h2>
        <div className="flex flex-1 flex-col border border-[#777] bg-white p-px">
            <table className="w-full table-fixed border-collapse">
                <thead>
                    <tr className="h-[19px] border-b border-[#888] bg-gradient-to-b from-[#f3f3f3] to-[#d5d5d5] text-left leading-[18px]">
                        <th className="border-r border-[#999] pl-[5px] font-normal">名称</th>
                        <th className="w-[78px] border-r border-[#bbb] pl-[5px] font-normal">刀具</th>
                        <th className="w-[45px] pl-[5px] font-normal">刀具号</th>
                    </tr>
                </thead>
                <tbody>
                    {rows.map((row, i) => (
                        <tr key={i} className={`h-[20px] border-b border-[#e2e2e2] ${i % 2 ? "bg-[#f7f7f7]" : ""} ${row.tool ? "text-[#8aa99a]" : "text-[#222]"}`}>
                            <td className="overflow-hidden border-r border-r-black p-0">
                                <div className="flex h-[19px] items-center">
                                    {row.g.split("").map((k, j) => <Guide key={j} kind={k} />)}
                                    {row.s && <Status s={row.s} />}
                                    {row.icon && <RowIcon icon={row.icon} />}
                                    <span className={`flex h-full flex-1 items-center ${row.icon === "folder" ? "pl-px" : row.icon ? "pl-px" : "pl-[4px]"} ${row.selected ? "bg-[#3399ff] text-white" : ""}`}><Mixed text={row.text} /></span>
                                </div>
                            </td>
                            <td className={`border-r border-[#ddd] py-0 pl-[5px] italic leading-[19px] ${row.selected ? "bg-[#3399ff] text-white" : ""}`}>{row.tool}</td>
                            <td className={`py-0 pl-[5px] italic leading-[19px] ${row.selected ? "bg-[#3399ff] text-white" : ""}`}>{row.tool && "0"}</td>
                        </tr>
                    ))}
                </tbody>
            </table>
            <div className="mt-auto"><HScroll thumb="w-[152px]" /></div>
        </div>
        <div className="mt-[3px] flex h-[8px] items-center gap-[4px]"><span className="h-[2px] flex-1 bg-[#bbb]" /><span className="h-[5px] w-[60px] border-b-2 border-r-2 border-[#999] bg-[#ddd]" /><span className="h-[2px] flex-1 bg-[#bbb]" /></div>
    </section>
);

const sideTools: [string, boolean][] = [["rainbow", true], ["plus", true], ["extrude", true], ["boss", false], ["patch", false], ["mesh", true]];
const DotRow = () => <span className="mx-auto my-[3px] block h-[3px] w-[36px] bg-[repeating-linear-gradient(90deg,#fff_0_1px,#999_1px_3px,transparent_3px_4px)]" />;

const SideTools = () => (
    <div className="flex w-[46px] shrink-0 flex-col border-r-2 border-[#bbb] bg-gradient-to-r from-[#d8d8d8] to-[#cfcfcf]">
        <div className="border-b border-[#aaa] bg-[#e2e2e2]">
            <DotRow />
            {sideTools.map(([name, more]) => (
                <div key={name} className="flex h-[31px] items-center pb-px pl-[6px]"><Tool name={name} w="w-[24px]" />{more && <Caret w="w-[16px]" />}</div>
            ))}
            <span className="flex h-[12px] items-center pl-[5px]"><Arrow dir="border-r-black" /></span>
        </div>
        <div className="border-b border-[#aaa] bg-[#d8d8d8]">
            <DotRow />
            {["nodeA", "nodeB", "nodeC", "nodeD"].map((name) => <div key={name} className="flex h-[31px] items-center pb-[2px] pl-[12px]"><Tool name={name} w="w-[24px]" /></div>)}
            <span className="flex h-[12px] items-center pl-[5px]"><Arrow dir="border-r-black" /></span>
        </div>
    </div>
);

const plainTab = "bg-gradient-to-b from-[#dedede] to-[#cfcfcf]";

const resourceTabs: [string, string, ReactNode][] = [
    ["Assembly", "mt-[14px] h-[40px]", <><path d="M2 3h6v5h4v5H2zM14 15h8v6h-8z" fill="#ffc83a" stroke="#a8790c" /><path d="M14 12h8M5 14v10M5 19h7" stroke="#123" /></>],
    ["Constraint", "mt-[2px] h-[40px]", <><path d="M3 2l9 5-9 5zM22 2l-9 5 9 5z" fill="#1c2ccd" /><path d="M12.500 1v22" stroke="#111" strokeDasharray="2 1" /><path d="M1 14h8v8H1z" fill="#ffec42" stroke="#111" /><path d="M14 14v8h8z" fill="#e22" stroke="#111" strokeWidth=".5" /></>],
    ["Part", "mt-[2px] h-[40px]", <><path d="M1 3q5-3 10 0v7q-5 3-10 0z" fill="#c4569b" stroke="#712957" /><ellipse cx="6" cy="3.500" rx="5" ry="2" fill="#e9a5cf" /><path d="M12 10h10M5 12v12M5 19h6" stroke="#123" /><circle cx="17" cy="19" r="4.500" stroke="#b34b8d" strokeWidth="1.500" /><circle cx="17" cy="19" r="1.500" stroke="#b34b8d" /></>],
    ["Operation", "mt-px h-[44px]", <><path d="M2 1h5v11H2z" fill="#3c8ed0" /><path d="M8 4h9M8 7h6M17 4l-8 7M12 11h9M5 13v11M5 20h7M14 17v6h7l-4-3z" stroke="#24609c" /></>],
    ["Machine", "mt-px h-[40px]", <><path d="M1 7l16-6v12L4 19zM4 6l3 12M8 5l3 10M12 3l3 10M2 12l15-6" stroke="#b47ec0" /><path d="M7 14l13-3 4 3v6l-12 4-5-3z" fill="#ff9b21" /><path d="M12 18l12-4v6l-12 4z" fill="#3787db" /></>],
    ["Tools", "mt-[2px] h-[40px]", <><path d="M1 8h7v14H1zM8 10h5v10H8zM13 8l4-1v14h-4z" fill="#ddd" stroke="#444" /><path d="M18 12q5-1 4 3t-4 4M19 21q4 1 4-2" stroke="#555" strokeWidth="1.500" /><path d="M16 2h7v6h-7z" fill="#ffb03a" stroke="#c22" /><path d="M6 6q2-4 8-3" stroke="#e52" strokeWidth="2" /></>],
    ["Library", "mt-[2px] h-[41px]", <><path d="M1 6l6-4h17l-2 17-5 4H1z" fill="#d8e8f4" /><path d="M1 7h4v15H1z" fill="#f57a12" /><path d="M6 7h5v15H6z" fill="#38b32c" /><path d="M12 7h4v15h-4z" fill="#1c83dc" /><path d="M17 7l6-4v15l-6 5z" fill="#1559b0" /></>],
    ["Info", "mt-[13px] h-[40px]", <><circle cx="8" cy="16" r="7.500" fill="#1b72d4" stroke="#0d4687" /><path d="M7 11h3v2H7zM6 15h4v4h1v1H6v-1h1v-3H6z" fill="#fff" /><path d="M8 6q9 0 10 10M9 1q14 2 14 15" stroke="#2d72b9" strokeWidth="2.500" /></>],
    ["History page", "mt-[14px] h-[40px]", <><path d="M3 1h13l6 6v16H3z" fill="#fff" stroke="#2b62b4" strokeWidth="1.500" /><path d="M16 1v6h6" stroke="#2b62b4" /><circle cx="12" cy="15" r="6" fill="#4a87c7" /><path d="M9 11l5-1 3 4-4 3 1 4-5-5z" fill="#3aa83a" /></>],
    ["History", "mt-[13px] h-[27px] rounded-b-none", <><circle cx="12" cy="15" r="11" fill="#f0f4fa" stroke="#555" strokeWidth="1.500" /><path d="M12 5v13M4 15h3M17 15h3" stroke="#122860" strokeWidth="2" /></>],
];

const ResourceBar = () => (
    <nav className="w-[31px] shrink-0 bg-gradient-to-b from-[#a9a9a9] to-[#bdbdbd]">
        <span className="flex h-[32px] items-center justify-center"><Settings className="h-4 w-4" strokeWidth={3} /></span>
        {resourceTabs.map(([name, cls, shape]) => (
            <button type="button" key={name} aria-label={name} className={`flex items-center justify-center rounded-r-[3px] border border-l-0 border-[#777] ${name === "Operation" ? "w-[28px] bg-[#f1f1f1]" : `w-[27px] ${plainTab}`} ${cls}`}><Svg>{shape}</Svg></button>
        ))}
        <div className="flex flex-col items-center gap-px pt-px">
            {["border-b-[#999]", "border-b-[#999]", "border-t-black", "border-t-black"].map((dir, i) => (
                <button type="button" aria-label={`scroll ${i + 1}`} key={i} className="flex h-[15px] w-[14px] flex-col items-center justify-center border border-[#888] bg-[#e6e6e6]">
                    {i === 0 && <span className="h-px w-[8px] bg-[#999]" />}
                    <Arrow dir={dir} />
                    {i === 3 && <span className="h-px w-[8px] bg-black" />}
                </button>
            ))}
        </div>
    </nav>
);

/* ---------- floating things ---------- */

const SogouLogo = ({ className }: { className: string }) => (
    <svg viewBox="0 0 28 28" className={className} fill="none" aria-hidden="true">
        <path d="M2 5L21 1q3 0 4 3l2 17q0 3-3 4L8 27q-3 0-4-3L1 8q-1-2 1-3z" fill="#30b516" />
        <path d="M21 7C14 5 7 7 8 11s13 2 12 7-9 4-14 2" stroke="#fff" strokeWidth="4" />
    </svg>
);

const ImeBar = () => (
    <div className="absolute right-[3px] top-[73px] z-20 flex h-[25px] w-[150px] items-center justify-between border border-[#b5c7d8] bg-white pl-[20px] pr-[5px] text-[#45506b]">
        <SogouLogo className="absolute -left-[14px] -top-[4px] h-7 w-7" />
        <span className="text-[16px] font-bold">五</span>
        <Moon className="h-4 w-4 -scale-x-100 fill-current" />
        <span className="text-[14px] font-bold">°,</span>
        <Keyboard className="h-[17px] w-[17px]" strokeWidth={3} />
        <User className="h-4 w-4 fill-current text-[#b8cfca]" />
        <Wrench className="h-4 w-4 fill-current" />
    </div>
);

const Watermark = () => (
    <div className="pointer-events-none absolute bottom-[18px] right-[24px] z-30 flex items-end gap-[9px]">
        <svg viewBox="0 0 72 78" className="h-[78px] w-[72px] opacity-75" fill="none" aria-hidden="true">
            <path d="M36 0L0 19v40l17 10L9 45l9-23 33-7z" fill="#a5daf2" />
            <path d="M36 0l36 19v40L36 78 17 69l22 2 20-17 5-20-14-19-30-2z" fill="#4aa9da" />
            <path d="M0 59V24l12-4-7 25 13 22 18 11z" fill="#5bb4e0" />
            <path d="M36 14l17 8 6 9v20L37 65l-20-8V31z" fill="#bfe4f5" />
            <path d="M36 25l15 8v16l-15 9-16-9V33z" fill="#45a5d8" />
            <path d="M20 33l16 8 15-8M36 41v17" stroke="#d8f2ff" strokeWidth="2" />
            <path d="M17 31l19-17 22 11M17 31v26l20 12 22-16" stroke="#2f93cc" strokeWidth="2" />
        </svg>
        <div className="w-[177px] text-white">
            <div className="font-['Noto_Sans_CJK_SC',sans-serif] text-[41px] font-bold leading-[42px] opacity-50">3D世界网</div>
            <div className="text-[17px] font-bold leading-[22px] opacity-50">WWW.3DSJW.COM</div>
        </div>
    </div>
);

/* ---------- taskbar ---------- */

const Ring = ({ w = "3.500" }: { w?: string }) => <path d="M5 13h14q0-8-7-8c-9 0-9 14 0 14 4 0 6-2 6-4" strokeWidth={w} />;

const tasks: [string, string, ReactNode][] = [
    ["NX", "bg-[linear-gradient(135deg,#999,#55585c)] border-[#bbb]", <><circle cx="12" cy="13" r="8" fill="#2297e0" /><path d="M9 8q5-1 9 4l-4 7q-8-4-5-11z" fill="#50c878" /><path d="M3 1h12l-2 13z" fill="#c41d3f" /><path d="M18 5q7 1 3 7T2 20M6 16l-4 4 6 2" stroke="#f0a020" strokeWidth="2" /></>],
    ["Explorer", "bg-[linear-gradient(135deg,#555,#1c1e22)] border-[#777]", <><path d="M2 3h8l1 2h11v17H2z" fill="#f4d982" stroke="#b89438" /><path d="M4 5h16v3H4z" fill="#fff" /><path d="M5 22v-7h14v7h-3v-4H8v4z" fill="#7cc4e8" stroke="#3b88ae" strokeWidth=".5" /></>],
    ["Browser", "bg-[linear-gradient(135deg,#555,#1c1e22)] border-[#777]", <><circle cx="12" cy="12" r="11" fill="#56b732" stroke="#fff" /><g stroke="#fff"><Ring /></g><path d="M3 22C2 14 12 3 22 1" stroke="#97df3e" strokeWidth="1.500" /></>],
    ["Paint", "bg-[linear-gradient(135deg,#555,#1c1e22)] border-[#777]", <><path d="M2 13C2 4 13 2 20 6c4 4 2 9-3 9-4 0-1 6-6 6S2 18 2 13z" fill="#c9dff0" stroke="#6b8ca8" /><circle cx="7" cy="13" r="2" fill="#d33" /><circle cx="10" cy="8" r="2" fill="#3a3" /><circle cx="16" cy="7" r="2" fill="#e9b41c" /><path d="M22 2l-7 20" stroke="#d98a2b" strokeWidth="3" /></>],
];

const Taskbar = () => (
    <footer className="relative flex h-[40px] shrink-0 items-center border-t border-[#4a5056] bg-[linear-gradient(#1f262c,#070a0d_45%,#04070a)] text-white">
        <button type="button" aria-label="Start" className="ml-[8px] h-[37px] w-[37px] rounded-full bg-[radial-gradient(circle_at_50%_100%,#4cd3f7,#1c5f9c_50%,#5b7c93)]">
            <svg viewBox="0 0 37 37" aria-hidden="true">
                <path d="M10 11q5-3 8 0l-2 7q-4-3-8 0z" fill="#f0642c" /><path d="M20 11q4 3 9 0l-2 7q-5 3-9 0z" fill="#8cc63e" /><path d="M8 20q4-3 8 0l-2 7q-4-3-8 0z" fill="#3f9be8" /><path d="M18 21q4 3 8 0l-2 7q-5 3-8 0z" fill="#fcc52c" />
            </svg>
        </button>
        <button type="button" aria-label="Clover" className="ml-[23px] h-8 w-8">
            <svg viewBox="0 0 32 32" aria-hidden="true">
                <path d="M11 1Q16 5 12 9q-2 4 3 6-6 4-11 0-6-5-2-10 3-5 9-4z" fill="#8cc814" /><path d="M31 11q-4 5-8 1-4-2-6 3-4-6 0-11 5-6 10-2 5 3 4 9z" fill="#3c8cf0" /><path d="M1 20q4-5 8-1 4 2 6-3 4 6 0 11-5 6-10 3-5-4-4-10z" fill="#f4b514" /><path d="M21 31q-5-4-1-8 2-4-3-6 6-4 11 0 6 5 2 10-3 5-9 4z" fill="#e65a50" />
            </svg>
        </button>
        <button type="button" aria-label="Internet Explorer" className="ml-[28px] h-8 w-8">
            <Svg className="h-8 w-8"><g stroke="#2f96f5"><Ring w="4.500" /></g><path d="M2 23C0 14 12 2 21 1q3 1 0 6" stroke="#2f96f5" strokeWidth="1.500" /></Svg>
        </button>
        <span className="ml-[13px] mr-[5px] h-[18px] w-px bg-[#444]" />
        <div className="flex gap-[4px]">
            {tasks.map(([name, cls, shape]) => (
                <button type="button" key={name} aria-label={name} className={`flex h-[38px] w-[58px] items-center justify-center rounded-[2px] border ${cls}`}><Svg className="h-8 w-8">{shape}</Svg></button>
            ))}
        </div>
        <div className="ml-auto flex items-center">
            <span className="flex w-[22px] justify-center"><SogouLogo className="h-[16px] w-[16px]" /></span>
            <span className="flex w-[22px] flex-col items-center gap-[5px]"><Copy className="h-[9px] w-[9px] -scale-x-100" strokeWidth={3} /><span className="border-x-[3px] border-t-[3px] border-x-transparent border-t-white" /></span>
            <span className="flex w-[24px] justify-center"><Svg className="h-4 w-4"><path d="M1 2h22v20H1z" fill="#e33" stroke="#fff" /><path d="M4 7h8v8H4zM14 7h6v3h-6zM14 12h6v3h-6zM4 17h16v2H4z" fill="#fff" /></Svg></span>
            <span className="flex w-[24px] justify-center"><span className="flex h-4 w-4 items-center justify-center rounded-[2px] border border-[#c9f5c9] bg-[#0a9b16] text-[7px] font-bold">QIY</span></span>
            <span className="flex w-[25px] justify-center"><Svg className="h-4 w-4"><circle cx="12" cy="12" r="12" fill="#64c431" /><g stroke="#fff"><Ring /></g></Svg></span>
            <span className="flex w-[23px] justify-center"><Bluetooth className="h-4 w-4 rounded-full text-[#4da8e8]" strokeWidth={3} /></span>
            <span className="flex w-[24px] justify-center"><Svg className="h-4 w-4"><circle cx="12" cy="12" r="12" fill="#f8c800" /><path d="M12 5v14M5 12h14" stroke="#14822c" strokeWidth="5" /></Svg></span>
            <span className="flex w-[24px] justify-center"><Svg className="h-4 w-4"><path d="M12 0l10 3v9q0 8-10 12Q2 20 2 12V3z" fill="#3ba62c" stroke="#eee" strokeWidth="2" /><path d="M14 4l-7 9h4l-1 7 7-10h-4z" fill="#fff" /></Svg></span>
            <span className="flex w-[24px] justify-center"><Plug className="h-4 w-4" strokeWidth={3} /></span>
            <span className="flex w-[24px] justify-center"><Volume2 className="h-4 w-4 fill-current" /></span>
            <span className="flex w-[25px] justify-center"><Svg className="h-4 w-4"><path d="M1 1h22v22H1z" fill="#1d7ac0" stroke="#9cd4f7" strokeWidth="2" /><path d="M4 6h7M7 6v12M14 6l6 9M20 6l-6 9M12 18h8" stroke="#fff" strokeWidth="2" /></Svg></span>
            <span className="flex h-[12px] w-[25px] items-end justify-center gap-px"><span className="h-[3px] w-[2px] bg-white" /><span className="h-[5px] w-[2px] bg-white" /><span className="h-[7px] w-[2px] bg-white" /><span className="h-[9px] w-[2px] bg-white" /><span className="h-[11px] w-[2px] bg-white" /></span>
            <time className="w-[77px] text-center font-['Noto_Sans',sans-serif] leading-[18px]">21:41<br />2018/12/4</time>
            <button type="button" aria-label="Show desktop" className="h-[38px] w-[14px] border border-[#555] bg-gradient-to-b from-[#444] to-[#111]" />
        </div>
    </footer>
);

export default function App() {
    return (
        <div className="relative flex min-h-screen flex-col overflow-hidden whitespace-nowrap bg-black font-['DejaVu_Sans','Noto_Sans_CJK_SC',sans-serif] text-[12px] leading-[15px] text-black">
            <svg className="absolute h-0 w-0" aria-hidden="true">
                <defs><linearGradient id="rainbow"><stop offset="0" stopColor="#e22" /><stop offset=".4" stopColor="#fd2" /><stop offset="1" stopColor="#2b4" /></linearGradient></defs>
            </svg>
            <div className="flex flex-1">
                <Dialog />
                <div className="flex min-w-0 flex-1 flex-col bg-[#dadada]">
                    <TitleBar />
                    <MenuBar />
                    <Toolbars />
                    <div className="flex flex-1">
                        <Viewport />
                        <SideTools />
                        <Navigator />
                        <ResourceBar />
                    </div>
                </div>
            </div>
            <Taskbar />
            <ImeBar />
            <span className="absolute -right-[24px] top-[143px] z-20 flex h-[42px] w-[42px] items-center rounded-full border-2 border-white bg-[radial-gradient(circle_at_40%_30%,#7ee08a,#22a844)] pl-[3px] font-bold text-white shadow">33</span>
            <Watermark />
        </div>
    );
}
